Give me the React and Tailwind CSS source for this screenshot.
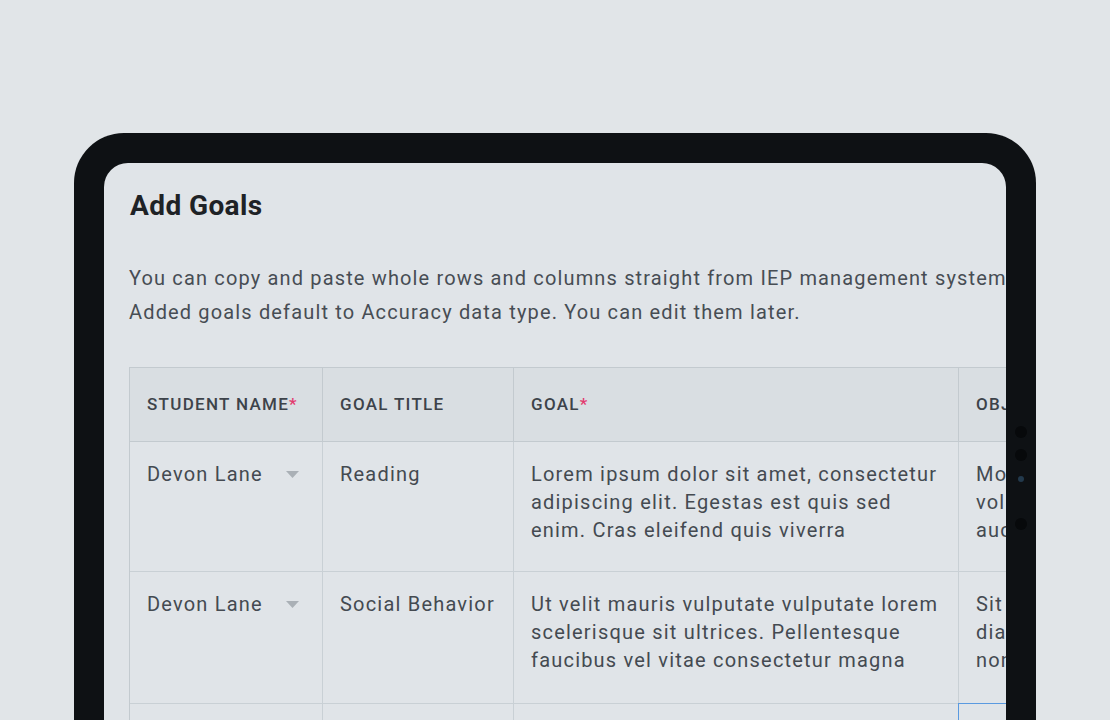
const rows = [
  {
    student: 'Devon Lane',
    title: 'Reading',
    goal: 'Lorem ipsum dolor sit amet, consectetur adipiscing elit. Egestas est quis sed enim. Cras eleifend quis viverra',
    objective: ['Morbi nunc sed id semper risus', 'volutpat ac tincidunt vitae', 'auctor elit sed vulputate'],
  },
  {
    student: 'Devon Lane',
    title: 'Social Behavior',
    goal: 'Ut velit mauris vulputate vulputate lorem scelerisque sit ultrices. Pellentesque faucibus vel vitae consectetur magna',
    objective: ['Sit amet consectetur', 'diam maecenas ultricies', 'non tellus orci ac auctor'],
  },
];

const Caret = () => (
  <svg width="13" height="7" viewBox="0 0 13 7" className="mt-[11px] shrink-0">
    <path d="M0 0 H13 L6.5 7 Z" fill="#aab0b6" />
  </svg>
);

const HeadCell = ({ children, required, last }) => (
  <div
    className={`h-[74px] flex items-center px-[17px] bg-[#d9dee2] border-b border-[#c3cacf] text-[17px] font-medium tracking-[1.3px] text-[#3d434a] whitespace-nowrap ${last ? '' : 'border-r'}`}
  >
    {children}
    {required && <span className="text-[#e23a6e]">*</span>}
  </div>
);

const Cell = ({ children, last, className = '' }) => (
  <div
    className={`px-[17px] pt-[18px] border-b border-[#c9d0d5] text-[20px] leading-[28px] tracking-[1.2px] text-[#444a51] ${last ? '' : 'border-r'} ${className}`}
  >
    {children}
  </div>
);

export default function App() {
  return (
    <div
      className="w-[1110px] h-[720px] overflow-hidden bg-[#e1e5e8]"
      style={{ fontFamily: 'Roboto, "Noto Sans", sans-serif' }}
    >
      <div className="relative ml-[74px] mt-[133px] w-[962px] h-[700px] rounded-[50px] bg-[#0e1114] p-[30px]">
        {/* camera / sensors */}
        <div className="absolute right-[9px] top-[293px] flex flex-col items-center">
          <div className="w-[12px] h-[12px] rounded-full bg-[#07090b]" />
          <div className="w-[12px] h-[12px] rounded-full bg-[#07090b] mt-[11px]" />
          <div className="w-[6px] h-[6px] rounded-full bg-[#233a4d] mt-[15px]" />
          <div className="w-[12px] h-[12px] rounded-full bg-[#07090b] mt-[36px]" />
        </div>

        <div className="h-full rounded-[24px] bg-[#e0e4e8] overflow-hidden pl-[26px] pt-[25px]">
          <h1 className="text-[28px] leading-[36px] font-bold tracking-[0.4px] text-[#1e2226]">Add Goals</h1>

          <div className="mt-[37px] -ml-px text-[20px] leading-[34px] text-[#474d54] tracking-[1.15px] whitespace-nowrap">
            <p>You can copy and paste whole rows and columns straight from IEP management systems.</p>
            <p>Added goals default to Accuracy data type. You can edit them later.</p>
          </div>

          <div className="mt-[38px] -ml-px w-[1300px] border-l border-t border-[#c3cacf] grid grid-cols-[193px_191px_445px_445px]">
            <HeadCell required>STUDENT NAME</HeadCell>
            <HeadCell>GOAL TITLE</HeadCell>
            <HeadCell required>GOAL</HeadCell>
            <HeadCell last>OBJECTIVE</HeadCell>

            {rows.map((r, i) => (
              <div key={i} className="contents">
                <Cell className={i === 0 ? 'h-[130px]' : 'h-[132px]'}>
                  <div className="flex justify-between pr-[6px]">
                    <span>{r.student}</span>
                    <Caret />
                  </div>
                </Cell>
                <Cell>{r.title}</Cell>
                <Cell>{r.goal}</Cell>
                <Cell last>
                  {r.objective.map((line) => (
                    <div key={line} className="whitespace-nowrap">{line}</div>
                  ))}
                </Cell>
              </div>
            ))}

            <div className="h-[80px] border-r border-[#c9d0d5]" />
            <div className="h-[80px] border-r border-[#c9d0d5]" />
            <div className="h-[80px] border-r border-[#c9d0d5]" />
            <div className="h-[80px] border-l border-t border-[#5a9ae0] -ml-px -mt-px" />
          </div>
        </div>
      </div>
    </div>
  );
}
